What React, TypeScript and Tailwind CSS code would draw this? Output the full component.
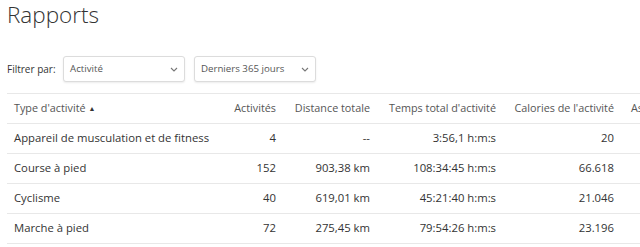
import React from "react";

const Chevron = () => (
  <svg width="8" height="5" viewBox="0 0 8 5" fill="none" className="shrink-0">
    <path d="M1 1l3 3 3-3" stroke="#777" strokeWidth="1.1" />
  </svg>
);

const Select = ({ label, w }: { label: string; w: string }) => (
  <div
    className={`${w} h-[26px] flex items-center justify-between pl-[6px] pr-[6px] border border-[#dcdcdc] rounded-[3px] bg-white shadow-[0_1px_2px_rgba(0,0,0,0.08)] text-[#555] text-[9.7px]`}
  >
    <span>{label}</span>
    <Chevron />
  </div>
);

const rows = [
  ["Appareil de musculation et de fitness", "4", "--", "3:56,1 h:m:s", "20"],
  ["Course à pied", "152", "903,38 km", "108:34:45 h:m:s", "66.618"],
  ["Cyclisme", "40", "619,01 km", "45:21:40 h:m:s", "21.046"],
  ["Marche à pied", "72", "275,45 km", "79:54:26 h:m:s", "23.196"],
];

export default function App() {
  return (
    <div
      className="w-[640px] h-[247px] overflow-hidden bg-white text-[#333]"
      style={{ fontFamily: '"Open Sans", "Noto Sans", sans-serif' }}
    >
      <div className="pl-[7px]">
        <h1 className="text-[22.5px] font-light leading-[30px] text-[#333]">Rapports</h1>
        <div className="flex items-center mt-[26px] h-[26px]">
          <span className="text-[10px] text-[#333] w-[56px]">Filtrer par:</span>
          <Select label="Activité" w="w-[122px]" />
          <div className="w-[9px]" />
          <Select label="Derniers 365 jours" w="w-[122px]" />
        </div>
        <table className="table-fixed w-[760px] mt-[11px] border-collapse border-t border-[#e8e8e8]">
          <colgroup>
            <col className="w-[219px]" />
            <col className="w-[57px]" />
            <col className="w-[94px]" />
            <col className="w-[126px]" />
            <col className="w-[118px]" />
            <col className="w-[146px]" />
          </colgroup>
          <thead>
            <tr className="h-[30px] border-b border-[#e8e8e8] text-[10.8px] text-[#555]">
              <th className="font-normal text-left px-[7px] whitespace-nowrap">
                Type d'activité <span className="text-[7px] relative -top-[1px] text-[#333]">▲</span>
              </th>
              <th className="font-normal text-right px-[7px] whitespace-nowrap">Activités</th>
              <th className="font-normal text-right px-[7px] whitespace-nowrap">Distance totale</th>
              <th className="font-normal text-right px-[7px] whitespace-nowrap">Temps total d'activité</th>
              <th className="font-normal text-right px-[7px] whitespace-nowrap">Calories de l'activité</th>
              <th className="font-normal text-left px-[10px] whitespace-nowrap">Ascension totale</th>
            </tr>
          </thead>
          <tbody>
            {rows.map((r, i) => (
              <tr key={i} className="h-[30px] border-b border-[#e8e8e8] text-[11.3px] text-[#333]">
                <td className="px-[7px] whitespace-nowrap">{r[0]}</td>
                <td className="px-[7px] text-right whitespace-nowrap">{r[1]}</td>
                <td className="px-[7px] text-right whitespace-nowrap">{r[2]}</td>
                <td className="px-[7px] text-right whitespace-nowrap">{r[3]}</td>
                <td className="px-[7px] text-right whitespace-nowrap">{r[4]}</td>
                <td className="px-[10px]"></td>
              </tr>
            ))}
          </tbody>
        </table>
      </div>
    </div>
  );
}
